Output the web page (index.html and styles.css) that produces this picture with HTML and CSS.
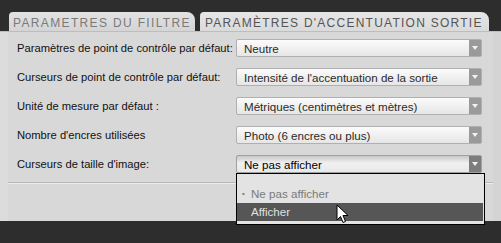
FILE: index.html
```html
<!DOCTYPE html>
<html lang="fr">
<head>
    <meta charset="UTF-8">
    <title>Paramètres</title>
    <link rel="stylesheet" href="styles.css">
</head>
<body>
    <div class="tabs">
        <div class="tab">PARAMETRES DU FIILTRE</div>
        <div class="tab active">PARAMÈTRES D'ACCENTUATION SORTIE</div>
    </div>

    <div class="panel">
        <div class="rows">
            <div class="row">
                <span class="label">Paramètres de point de contrôle par défaut:</span>
                <div class="select"><span>Neutre</span><i class="arrow"></i></div>
            </div>
            <div class="row">
                <span class="label">Curseurs de point de contrôle par défaut:</span>
                <div class="select"><span>Intensité de l'accentuation de la sortie</span><i class="arrow"></i></div>
            </div>
            <div class="row">
                <span class="label">Unité de mesure par défaut :</span>
                <div class="select"><span>Métriques (centimètres et mètres)</span><i class="arrow"></i></div>
            </div>
            <div class="row">
                <span class="label">Nombre d'encres utilisées</span>
                <div class="select"><span>Photo (6 encres ou plus)</span><i class="arrow"></i></div>
            </div>
            <div class="row">
                <span class="label">Curseurs de taille d'image:</span>
                <div class="select open">
                    <span>Ne pas afficher</span><i class="arrow"></i>
                    <div class="menu">
                        <div class="item current"><b>•</b>Ne pas afficher</div>
                        <div class="item hover">Afficher</div>
                        <svg class="cursor" width="13" height="20" viewBox="0 0 13 20">
                            <path d="M1 1 L1 16 L4.5 12.5 L7 18.5 L9.5 17.5 L7 11.5 L12 11.5 Z" fill="#fff" stroke="#000" stroke-width="1"/>
                        </svg>
                    </div>
                </div>
            </div>
        </div>
        <div class="divider"></div>
    </div>
</body>
</html>
```

FILE: styles.css
```css
body {
    margin: 0;
    background-color: #2d2d2d;
    font-family: "Liberation Sans", Arial, sans-serif;
    width: 501px;
    height: 243px;
    overflow: hidden;
}

.tabs {
    display: flex;
    gap: 5px;
    padding: 12px 0 0 9px;
    height: 19px;
}

.tab {
    background: linear-gradient(#e2e2e2, #d4d4d4);
    color: #7a7a7a;
    font-size: 12px;
    letter-spacing: 1.35px;
    line-height: 22px;
    padding-left: 4px;
    width: 182px;
    border-radius: 4px 8px 0 0;
    white-space: nowrap;
}

.tab.active {
    background: linear-gradient(#e6e6e6, #dadada);
    color: #555;
    width: 284px;
    padding-left: 5px;
    letter-spacing: 1.25px;
}

.panel {
    background-color: #d8d8d8;
    border-top: 1px solid #bdbdbd;
    height: 189px;
    box-shadow: inset 8px 0 0 #dcdcdc, inset -8px 0 0 #d4d4d4;
}

.rows {
    display: flex;
    flex-direction: column;
    gap: 11px;
    padding: 7px 0 0 17px;
}

.row {
    display: flex;
    align-items: center;
    height: 18px;
}

.label {
    width: 219px;
    font-size: 11.2px;
    color: #111;
    white-space: nowrap;
}

.select {
    position: relative;
    width: 246px;
    height: 18px;
    box-sizing: border-box;
    border: 1px solid #b0b0b0;
    border-radius: 2px;
    background: linear-gradient(#fbfbfb, #e6e6e6);
    display: flex;
    align-items: center;
    font-size: 11.6px;
    color: #2a2a2a;
    white-space: nowrap;
}

.select span {
    flex: 1;
    padding-left: 7px;
}

.arrow {
    width: 12px;
    height: 16px;
    background-color: #9a9a9a;
    position: relative;
}

.arrow::after {
    content: "";
    position: absolute;
    left: 3px;
    top: 6px;
    border-left: 3px solid transparent;
    border-right: 3px solid transparent;
    border-top: 4px solid #f2f2f2;
}

.select.open {
    background: linear-gradient(#c8c8c8, #f0f0f0 45%, #e8e8e8);
    border-color: #a0a0a0;
    color: #000;
}

.select.open .arrow {
    background-color: #7d7d7d;
}

.menu {
    position: absolute;
    left: -1px;
    top: 17px;
    width: 249px;
    height: 52px;
    box-sizing: border-box;
    border: 1px solid #000;
    background-color: #e3e3e3;
    padding-top: 11px;
}

.item {
    height: 18px;
    line-height: 18px;
    padding-left: 14px;
    font-size: 11.6px;
    margin-right: 1px;
}

.item.current {
    color: #7a7a7a;
    position: relative;
}

.item.current b {
    position: absolute;
    left: 5px;
    font-size: 8px;
    font-weight: normal;
}

.item.hover {
    background-color: #565656;
    color: #e0e0e0;
}

.cursor {
    position: absolute;
    left: 99px;
    top: 30px;
}

.divider {
    margin: 9px 8px 0 8px;
    border-top: 1px solid #b8b8b8;
    border-bottom: 1px solid #ececec;
}
```
